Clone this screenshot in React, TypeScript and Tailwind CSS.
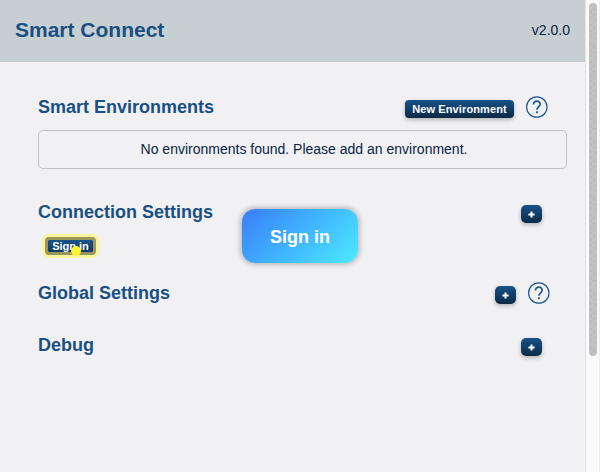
import type { ReactNode } from "react";

function HelpIcon() {
  return (
    <svg className="size-[22px] shrink-0" viewBox="0 0 22 22" fill="none" stroke="#1d5790">
      <circle cx="10.8" cy="11" r="10.2" strokeWidth="1.2" />
      <path d="M7.5 8.5C7.5 6.4 8.8 5.2 10.9 5.2s3.3 1.3 3.3 3.1c0 2.5-3.3 2.7-3.3 5.4" strokeWidth="1.7" />
      <path d="M10.9 15.3v1.9" strokeWidth="1.9" />
    </svg>
  );
}

function PlusButton() {
  return (
    <button className="mt-[4px] flex h-[18px] w-[21px] shrink-0 items-center justify-center rounded-[5px] bg-linear-to-b from-[#17528a] to-[#0b2b47] shadow-[0_2px_4px_rgba(0,0,0,0.25)]">
      <svg className="size-[7px]" viewBox="0 0 7 7" stroke="#fff" strokeWidth="1.9">
        <path d="M3.5 .4v6.2M.4 3.5h6.2" />
      </svg>
    </button>
  );
}

function SectionRow({ title, className, children }: { title: string; className: string; children: ReactNode }) {
  return (
    <div className={`flex items-center justify-between ${className}`}>
      <h2 className="text-[18px] font-bold leading-[22px] whitespace-nowrap text-[#1a4f83]">{title}</h2>
      <div className="flex items-center">{children}</div>
    </div>
  );
}

export default function App() {
  return (
    <div className="relative flex h-[472px] w-[600px] overflow-hidden bg-[#f1f1f4] font-['Liberation_Sans',Arial,sans-serif] text-[#0b2342]">
      <div className="w-[585px]">
        <header className="flex h-[62px] items-center justify-between bg-[#c8cfd2] pr-[15px] pb-[2px] pl-[15px]">
          <h1 className="text-[21px] leading-[24px] font-bold text-[#1a4f83]">Smart Connect</h1>
          <span className="text-[14px]">v2.0.0</span>
        </header>
        <main className="pt-[22px] pr-[18px] pl-[38px]">
          <SectionRow title="Smart Environments" className="h-[46px] pr-[19px]">
            <button className="mt-[4px] mr-[12px] h-[18px] w-[109px] rounded-[4px] bg-linear-to-b from-[#17528a] to-[#0b2b47] text-[11px] leading-[18px] font-bold tracking-[0.12px] whitespace-nowrap text-white shadow-[0_2px_4px_rgba(0,0,0,0.25)]">
              New Environment
            </button>
            <HelpIcon />
          </SectionRow>
          <div className="flex h-[39px] items-center justify-center rounded-[5px] border border-[#c2c2c6] pl-[3px] text-[14px]">
            No environments found. Please add an environment.
          </div>
          <SectionRow title="Connection Settings" className="mt-[21px] h-[44px] pr-[25px]">
            <PlusButton />
          </SectionRow>
          <div className="flex h-[24px] pl-[7px]">
            <button className="relative mt-[3px] h-[18px] w-[51px] rounded-[4px] border-[3px] border-[#9b9659] bg-linear-to-b from-[#17528a] to-[#123b60] bg-clip-padding text-[11px] leading-[12px] font-bold whitespace-nowrap text-white shadow-[0_0_0_3px_#f8f59b]">
              Sign in
              <span className="absolute top-[6px] left-[23px] size-[10px] rounded-full bg-[#fcf434]" />
            </button>
          </div>
          <SectionRow title="Global Settings" className="mt-[12px] h-[46px] pr-[17px]">
            <PlusButton />
            <span className="ml-[12px]">
              <HelpIcon />
            </span>
          </SectionRow>
          <SectionRow title="Debug" className="mt-[6px] h-[46px] pr-[25px]">
            <PlusButton />
          </SectionRow>
        </main>
      </div>
      <div className="flex w-[15px] justify-center border-x border-l-[#e1e1e4] border-r-[#ededed] bg-[#fafafa] pt-[3px]">
        <svg className="h-[353px] w-[8px] rounded-full bg-[#c1c1c2]" viewBox="0 0 8 353">
          <defs>
            <pattern id="speckle" width="8" height="19" patternUnits="userSpaceOnUse">
              <path d="M1 2h2v1H1zM5 4h1v3H5zM2 8h1v2H2zM4 11h3v1H4zM1 14h1v2H1zM6 16h1v2H6z" fill="#b1b5be" />
            </pattern>
          </defs>
          <rect width="8" height="353" fill="url(#speckle)" />
        </svg>
      </div>
      <div className="absolute top-[209px] left-[242px] flex h-[54px] w-[116px] items-center justify-center rounded-[13px] bg-linear-135 from-[#3b7cf8] to-[#4feaff] pt-[2px] text-[18px] font-bold text-white shadow-[0_0_5px_2px_rgba(0,0,0,0.22)]">
        Sign in
      </div>
    </div>
  );
}
